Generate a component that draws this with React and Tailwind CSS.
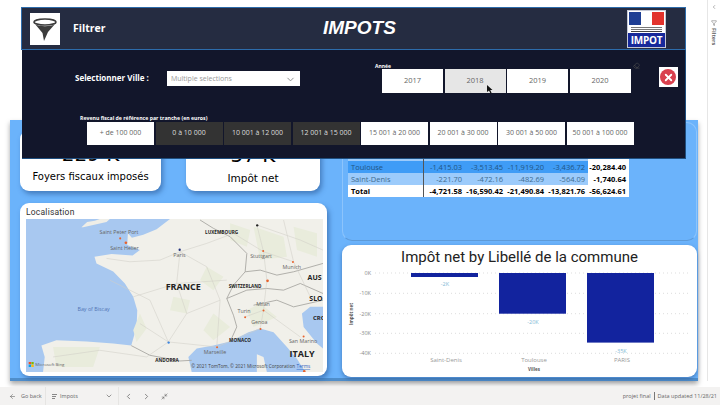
import React from 'react';
import { ChevronDown, ChevronLeft, ChevronRight, ArrowLeft, Minimize2, Filter, Eraser, X } from 'lucide-react';

const years = ['2017', '2018', '2019', '2020'];
const tranches = ['+ de 100 000', '0 à 10 000', '10 001 à 12 000', '12 001 à 15 000', '15 001 à 20 000', '20 001 à 30 000', '30 001 à 50 000', '50 001 à 100 000'];
const rows = [
  { name: 'Ville', values: ['2017', '2018', '2019', '2020', 'Total'], bg: 'bg-white', text: 'text-[#333] font-bold' },
  { name: 'PARIS', values: ['-3,084.85', '-12,604.81', '-9,088.95', '-9,820.95', '-34,599.57'], bg: 'bg-[#9ccbfb]', text: 'text-[#456]' },
  { name: 'Toulouse', values: ['-1,415.03', '-3,513.45', '-11,919.20', '-3,436.72', '-20,284.40'], bg: 'bg-[#3f9cf6]', text: 'text-[#1f5685]' },
  { name: 'Saint-Denis', values: ['-221.70', '-472.16', '-482.69', '-564.09', '-1,740.64'], bg: 'bg-[#9ccbfb]', text: 'text-[#3f6c90]' },
];
const totals = ['-4,721.58', '-16,590.42', '-21,490.84', '-13,821.76', '-56,624.61'];

function FranceMap() {
  // coordinates are the map at 3x, scaled down by the viewBox
  return (
    <svg viewBox="79 57 889 458" className="block w-[297px] h-[153px]" style={{ fontFamily: '"Open Sans", sans-serif' }}>
      <rect x="79" y="57" width="889" height="458" fill="#a8c8f0" />
      <path d="M245 82 L262 66 L285 62 L300 57 L330 57 L320 66 L250 82Z" fill="#efeee7" />
      <path d="M510 57 L470 88 L430 104 L396 113 L384 100 L382 135 L420 150 L398 166 L335 162 L284 170 L290 190 L340 214 L375 250 L400 290 L412 330 L410 380 L394 436 L340 430 L260 424 L170 420 L125 436 L135 470 L130 515 L575 515 L565 470 L590 445 L640 436 L690 424 L745 396 L780 385 L820 396 L860 440 L890 475 L915 515 L968 515 L968 445 L950 430 L910 380 L905 340 L930 320 L968 320 L968 57Z" fill="#f1f0ea" />
      <path d="M770 462 L790 470 L800 515 L770 515Z" fill="#f1f0ea" />
      <path d="M420 340 L440 385 L410 425 L400 390Z M520 290 L570 300 L560 340 L510 330Z M620 200 L670 230 L640 270 L600 240Z M760 80 L850 110 L860 170 L780 180Z M640 340 L690 380 L640 420 L610 390Z M740 330 L780 310 L830 350 L760 380Z M160 440 L300 440 L280 500 L170 500Z M690 70 L750 90 L740 140 L690 120Z M880 80 L950 100 L950 170 L890 150Z" fill="#e9ecdc" />
      <g fill="none" stroke="#a3a29e" strokeWidth="2.5">
        <path d="M394 436 L450 465 L540 482 L575 480" />
        <path d="M690 424 L710 380 L700 345 L680 295 L700 255 L735 215 L740 160 L690 110 L640 85 L600 60" />
        <path d="M680 295 L740 270 L800 265 L850 270 L900 250 L968 280" />
        <path d="M735 215 L780 210 L830 225 L880 215 L968 190" />
        <path d="M760 315 L830 300 L880 320 L968 300" />
      </g>
      <g fill="none" stroke="#cfcdc6" strokeWidth="1.6">
        <path d="M540 155 L480 180 L390 185 L320 175" />
        <path d="M540 155 L530 250 L560 340 L505 425 L420 370" />
        <path d="M540 155 L620 200 L660 300 L650 440" />
        <path d="M540 155 L620 130 L700 100 L790 155 L880 185" />
        <path d="M505 425 L650 440 L780 385 L790 330 L735 350" />
        <path d="M790 155 L800 240 L790 330 L900 410" />
        <path d="M400 290 L530 250 L680 240" />
        <path d="M770 75 L790 155 M770 75 L900 120 L968 150" />
        <path d="M505 425 L440 470 L300 450 L160 470 M330 240 L450 300 L505 425 M660 300 L560 340 M850 60 L880 185 L930 290" />
      </g>
      <g fill="#e8622c">
        <circle cx="361" cy="115" r="3" /><circle cx="378" cy="128" r="4" /><circle cx="789" cy="153" r="3" /><circle cx="878" cy="186" r="3" />
        <circle cx="802" cy="242" r="4" /><circle cx="790" cy="331" r="3" /><circle cx="735" cy="351" r="3" /><circle cx="781" cy="386" r="3" />
        <circle cx="910" cy="409" r="3" /><circle cx="651" cy="441" r="3" /><circle cx="912" cy="513" r="4" />
      </g>
      <circle cx="539" cy="149" r="3.5" fill="#27357f" />
      <circle cx="506" cy="427" r="3.5" fill="#3d86e0" />
      <circle cx="771" cy="76" r="3.5" fill="#222" />
      <g fill="#666" fontSize="16">
        <text x="299" y="103">Saint Peter Port</text>
        <text x="331" y="149">Saint Helier</text>
        <text x="520" y="170">Paris</text>
        <text x="750" y="175">Stuttgart</text>
        <text x="847" y="207">Munich</text>
        <text x="768" y="318">Milan</text>
        <text x="712" y="337">Turin</text>
        <text x="753" y="372">Genoa</text>
        <text x="866" y="429">San Marino</text>
        <text x="611" y="462">Marseille</text>
      </g>
      <text x="233" y="332" fontSize="16" fill="#5376b6">Bay of Biscay</text>
      <g fill="#222" fontWeight="700">
        <text x="497" y="270" fontSize="27">FRANCE</text>
        <text x="868" y="471" fontSize="27">ITALY</text>
        <text x="922" y="239" fontSize="21">AUS</text>
        <text x="927" y="301" fontSize="21">SLO</text>
        <text x="938" y="358" fontSize="18">CRO</text>
        <text x="615" y="103" fontSize="14">LUXEMBOURG</text>
        <text x="686" y="264" fontSize="14">SWITZERLAND</text>
        <text x="687" y="425" fontSize="14">MONACO</text>
        <text x="466" y="484" fontSize="14">ANDORRA</text>
      </g>
      <g>
        <rect x="87" y="485" width="7" height="7" fill="#f25022" /><rect x="95" y="485" width="7" height="7" fill="#7fba00" />
        <rect x="87" y="493" width="7" height="7" fill="#00a4ef" /><rect x="95" y="493" width="7" height="7" fill="#ffb900" />
        <text x="107" y="498" fontSize="13" fill="#666">Microsoft Bing</text>
      </g>
      <text x="574" y="503" fontSize="14" fill="#444">© 2021 TomTom, © 2021 Microsoft Corporation</text>
      <text x="889" y="503" fontSize="14" fill="#2b62c0" textDecoration="underline">Terms</text>
    </svg>
  );
}

function BarChart() {
  const grid = [[273, '0K'], [293.3, '-10K'], [313.7, '-20K'], [333.3, '-30K'], [353.3, '-40K']];
  const bars = [[411, 4, 445, 286, '-2K'], [499, 40.7, 533, 324, '-20K'], [587, 69.6, 621, 353, '-35K']];
  return (
    <svg viewBox="342 262 355 115" className="block w-[355px] h-[115px]" style={{ fontFamily: '"Open Sans", sans-serif' }}>
      {grid.map(([y, label]) => (
        <g key={label}>
          <line x1="375" x2="690" y1={y} y2={y} stroke="#ddd" strokeWidth="1" strokeDasharray="1 3" />
          <text x="371" y={y + 2} textAnchor="end" fontSize="5.5" fill="#888">{label}</text>
        </g>
      ))}
      {bars.map(([x, h, lx, ly, label]) => (
        <g key={label}>
          <rect x={x} y="273" width="67" height={h} fill="#12239e" />
          <text x={lx} y={ly} textAnchor="middle" fontSize="5.5" fill="#7fb9d6">{label}</text>
        </g>
      ))}
      <text x="446" y="362" textAnchor="middle" fontSize="6" fill="#999">Saint-Denis</text>
      <text x="534" y="362" textAnchor="middle" fontSize="6" fill="#999">Toulouse</text>
      <text x="622" y="362" textAnchor="middle" fontSize="6" fill="#999">PARIS</text>
      <text x="534" y="371" textAnchor="middle" fontSize="4.5" fontWeight="700" fill="#555">Villes</text>
      <text transform="translate(353 314) rotate(-90)" textAnchor="middle" fontSize="4.5" fontWeight="700" fill="#555">Impôt net</text>
    </svg>
  );
}

function Logo() {
  return (
    <div className="w-[39px] h-[38px] bg-white flex flex-col border border-[#c5c9d6]">
      <div className="h-[13px] mx-[1px] mt-[1px] flex">
        <div className="flex-1 bg-[#1f3f94]" />
        <div className="flex-1 bg-white" />
        <div className="flex-1 bg-[#e2332d]" />
      </div>
      <div className="mx-[3px] mt-[2px] h-[1px] bg-[#777]" />
      <div className="mx-[3px] mt-[1px] h-[1px] bg-[#777]" />
      <div className="mx-[3px] mt-[1px] h-[1px] bg-[#444]" />
      <div className="mt-auto h-[14px] bg-[#16289a] text-white text-[10px] leading-[14px] font-bold text-center tracking-tight">IMPOT</div>
    </div>
  );
}

export default function App() {
  return (
    <div className="relative w-[720px] h-[405px] overflow-hidden bg-white flex flex-col font-['Open_Sans',sans-serif]">
      <div className="flex flex-1 min-h-0">
        {/* report canvas */}
        <div className="w-[707px] pt-[120px] pl-[10px]">
          <div className="w-[688px] h-[261px] bg-[#6bb3fb] flex pt-[2px] pl-[10px] shadow-[0_3px_5px_rgba(0,0,0,0.35)] border-b-[3px] border-[#4f8ecb]">
            <div className="w-[307px] pt-[8px] flex flex-col gap-[12px]">
              <div className="flex h-[61px]">
                <div className="w-[141px] bg-white rounded-[9px] shadow-[2px_3px_5px_rgba(30,70,130,0.5)] flex flex-col items-center justify-end pb-[6px] font-['DejaVu_Sans',sans-serif] text-black">
                  <div className="text-[20px] leading-[30px]">229 K</div>
                  <div className="text-[10px] leading-[16px] whitespace-nowrap">Foyers fiscaux imposés</div>
                </div>
                <div className="ml-[25px] w-[134px] bg-white rounded-[9px] shadow-[2px_3px_5px_rgba(30,70,130,0.5)] flex flex-col items-center justify-end pb-[5px] font-['DejaVu_Sans',sans-serif] text-black">
                  <div className="text-[20px] leading-[30px]">57 K</div>
                  <div className="text-[10.5px] leading-[16px]">Impôt net</div>
                </div>
              </div>
              <div className="h-[173px] bg-white rounded-[9px] px-[6px] shadow-[2px_3px_5px_rgba(30,70,130,0.5)]">
                <div className="h-[16px] pt-[2px] text-[8.5px] leading-[14px] tracking-wide text-[#333] font-['Roboto',sans-serif]">Localisation</div>
                <FranceMap />
              </div>
            </div>
            <div className="ml-[15px] w-[355px] flex flex-col gap-[4px]">
              <div className="h-[119px] rounded-[10px] border border-[#8cc4fc] border-b-[#5d9ad8] pl-[5px] pt-[14px]">
                <div className="w-[281px] text-[7.5px] leading-[12px]">
                  {rows.map((row) => (
                    <div key={row.name} className="flex h-[12px]">
                      <div className={`w-[77px] pl-[3px] border-r border-[#555] ${row.bg} ${row.text}`}>{row.name}</div>
                      {row.values.map((v, i) => (
                        <div
                          key={i}
                          className={`w-[41.5px] text-right pr-[3px] whitespace-nowrap ${i === 4 ? 'bg-white text-black font-bold' : `${row.bg} ${row.text}`}`}
                        >
                          {v}
                        </div>
                      ))}
                    </div>
                  ))}
                  <div className="flex h-[12px] bg-white text-black font-bold">
                    <div className="w-[77px] pl-[3px] border-r border-[#555]">Total</div>
                    {totals.map((v) => (
                      <div key={v} className="w-[41.5px] text-right pr-[3px] whitespace-nowrap">{v}</div>
                    ))}
                  </div>
                </div>
              </div>
              <div className="h-[132px] bg-white rounded-[9px] shadow-[0_2px_4px_rgba(30,70,130,0.5)] overflow-hidden">
                <div className="h-[17px] pt-[2px] text-center text-[15px] leading-[20px] text-[#222] font-['Roboto',sans-serif] whitespace-nowrap">Impôt net by Libellé de la commune</div>
                <BarChart />
              </div>
            </div>
          </div>
        </div>

        {/* collapsed filters pane */}
        <div className="w-[13px] border-l border-[#e6e6e6] flex flex-col items-center pt-[4px] text-[#666]">
          <ChevronLeft size={6} />
          <Filter size={6} className="mt-[10px]" />
          <div className="mt-[2px] text-[5.5px] leading-[6px] font-bold [writing-mode:vertical-rl]">Filters</div>
        </div>
      </div>

      {/* footer bar */}
      <div className="h-[18px] mt-[6px] bg-[#f3f2f1] flex items-center text-[5.5px] text-[#666]">
        <div className="w-[46px] flex items-center pl-[9px] gap-[5px] border-r border-[#e6e5e3] h-full">
          <ArrowLeft size={7} />
          <span>Go back</span>
        </div>
        <div className="w-[73px] flex items-center justify-between pl-[6px] pr-[5px] border-r border-[#e6e5e3] h-full">
          <span className="flex items-center gap-[3px]">
            <span className="flex flex-col gap-[1px]">
              <span className="block w-[5px] h-[1px] bg-[#888]" />
              <span className="block w-[4px] h-[1px] bg-[#888]" />
              <span className="block w-[3px] h-[1px] bg-[#888]" />
            </span>
            Impots
          </span>
          <ChevronDown size={8} />
        </div>
        <ChevronLeft size={9} className="ml-[5px]" />
        <ChevronRight size={9} className="ml-[9px]" />
        <Minimize2 size={7} className="ml-[10px]" />
        <div className="ml-auto pr-[3px] flex items-center gap-[3px] whitespace-nowrap">
          <span>projet final</span>
          <span className="w-px h-[8px] bg-[#777]" />
          <span>Data updated 11/28/21</span>
        </div>
      </div>

      {/* filter panel opened over the report */}
      <div className="absolute left-[21px] top-[7px] w-[665px]">
        <div className="h-[43px] bg-[#252c41] border border-[#2d6cab] flex items-center pl-[8px] relative">
          <div className="w-[30px] h-[32px] bg-white flex items-center justify-center">
            <svg viewBox="0 0 30 32" className="w-[30px] h-[32px]">
              <ellipse cx="15" cy="9" rx="11" ry="3" fill="none" stroke="#3c3c3c" strokeWidth="1.6" />
              <path d="M5 11 C9 14 21 14 25 11 L18 19 L14 28 L12.5 20 Z" fill="#3c3c3c" />
            </svg>
          </div>
          <div className="ml-[13px] text-white text-[10.5px] font-bold">Filtrer</div>
          <div className="absolute left-[301px] top-[7px] text-white text-[19px] leading-[26px] font-bold italic font-['Liberation_Sans',sans-serif]">IMPOTS</div>
          <div className="ml-auto mr-[19px]"><Logo /></div>
        </div>
        <div className="ml-[1px] w-[664px] h-[109px] bg-[#12162b] border-r border-b border-[#1f4f80] pt-[13px]">
          <div className="flex items-start pl-[53px] h-[51px]">
            <div className="w-[92px] mt-[7px] text-white text-[8px] font-bold leading-[15px] whitespace-nowrap">Selectionner Ville :</div>
            <div className="w-[133px] h-[15px] mt-[8px] bg-white flex items-center justify-between pl-[4px] pr-[4px] pt-[1px] text-[7px] text-[#999]">
              <span>Multiple selections</span>
              <ChevronDown size={11} className="text-[#888]" />
            </div>
            <div className="ml-[75px] relative">
              <div className="h-[6px] text-white text-[5px] leading-[6px] font-bold">Année</div>
              <Eraser size={7} className="absolute right-[-9px] top-[-1px] text-[#555]" />
              <div className="pl-[7px] flex gap-[1.5px]">
                {years.map((y) => (
                  <div key={y} className={`w-[61px] h-[24px] flex items-center justify-center text-[7.5px] text-[#666] ${y === '2018' ? 'bg-[#e6e6e6]' : 'bg-white'}`}>{y}</div>
                ))}
              </div>
            </div>
            <div className="ml-[28px] mt-[4px] w-[19px] h-[20px] bg-white flex items-center justify-center">
              <div className="w-[16px] h-[16px] rounded-full bg-[#d9404e] flex items-center justify-center">
                <X size={11} strokeWidth={4} className="text-white" />
              </div>
            </div>
          </div>
          <div className="pl-[58px] h-[8px] text-white text-[5.2px] leading-[8px] font-bold">Revenu fiscal de référence par tranche (en euros)</div>
          <div className="pl-[65px] flex gap-[1.5px]">
            {tranches.map((t, i) => (
              <div key={t} className={`w-[67px] h-[23px] flex items-center justify-center text-[7px] whitespace-nowrap ${i === 0 || i > 3 ? 'bg-white text-[#666]' : 'bg-[#333333] text-[#ddd]'}`}>{t}</div>
            ))}
          </div>
        </div>
      </div>

      {/* mouse pointer */}
      <svg viewBox="0 0 6 9" className="absolute left-[487px] top-[85px] w-[6px] h-[9px]">
        <path d="M0 0 L0 7 L2 5.5 L3.5 8.5 L4.6 8 L3.2 5 L5.5 5Z" fill="#111" />
      </svg>
    </div>
  );
}
